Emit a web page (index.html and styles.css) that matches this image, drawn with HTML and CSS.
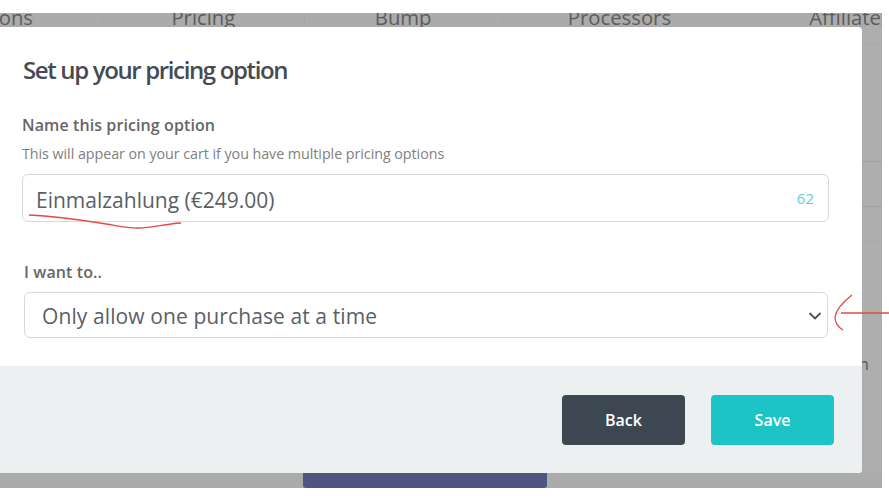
FILE: index.html
```html
<!DOCTYPE html>
<html lang="en">
<head>
  <meta charset="UTF-8">
  <title>Set up your pricing option</title>
  <link rel="stylesheet" href="styles.css">
</head>
<body>
  <div class="page">
    <div class="tabs">
      <div class="tab tab-ons">ons</div>
      <div class="tab tab-pricing">Pricing</div>
      <div class="tab tab-bump">Bump</div>
      <div class="tab tab-processors">Processors</div>
      <div class="tab tab-affiliate">Affiliate</div>
    </div>

    <div class="middle">
      <div class="modal">
        <div class="modal-body">
          <h1>Set up your pricing option</h1>
          <label class="field-label" for="name">Name this pricing option</label>
          <p class="hint">This will appear on your cart if you have multiple pricing options</p>
          <div class="name-box">
            <input id="name" type="text" value="Einmalzahlung (€249.00)">
            <span class="count">62</span>
          </div>
          <label class="field-label want-label" for="want">I want to..</label>
          <div class="select-wrap">
            <select id="want">
              <option>Only allow one purchase at a time</option>
            </select>
            <svg class="chevron" width="14" height="8" viewBox="0 0 14 8">
              <path d="M1.5 1L7 6.5L12.500 1"/>
            </svg>
          </div>
        </div>
        <div class="modal-footer">
          <button class="btn btn-back">Back</button>
          <button class="btn btn-save">Save</button>
        </div>
      </div>
      <div class="side">
        <div class="side-row row-a"></div>
        <div class="side-row row-b"></div>
        <div class="side-row row-c"></div>
        <div class="side-row row-d"></div>
        <div class="side-n">n</div>
      </div>
    </div>

    <div class="under">
      <div class="under-button"></div>
    </div>
  </div>

  <!-- red pen marks on top of the screenshot -->
  <svg class="marks" width="889" height="500" viewBox="0 0 889 500">
    <path d="M29 215C50 216 75 219 100 223C115 225 125 228 138 228C155 228 162 224 181 223"/>
    <path d="M852 295C843 302 836 310 835 317C835 322 838 327 843 330"/>
    <path d="M841 313L889 313"/>
  </svg>
</body>
</html>
```

FILE: styles.css
```css
* {
  margin: 0;
  padding: 0;
  box-sizing: border-box;
}

body {
  background: #fff;
  font-family: 'Open Sans', sans-serif;
  color: #555;
  width: 889px;
  height: 500px;
  overflow: hidden;
}

.page {
  width: 882px;
  margin-top: 13px;
  background: #aeaeae;
}

/* tabs behind the modal, cut off at the top */
.tabs {
  height: 14px;
  display: flex;
  overflow: hidden;
  background: #ababab;
  font-size: 20.300px;
  line-height: 20px;
  color: #5c5c5c;
}

.tab {
  height: 14px;
  display: flex;
  align-items: flex-end;
  justify-content: center;
  border-right: 1px solid #a4a4a4;
  white-space: nowrap;
}

.tab-ons {
  width: 103px;
  justify-content: flex-end;
  padding-right: 69px;
}

.tab-pricing { width: 202px; }
.tab-bump { width: 198px; }
.tab-processors { width: 234px; border-right: 0; }
.tab-affiliate { padding-left: 73px; }

.middle {
  display: flex;
  height: 446px;
}

.modal {
  width: 862px;
  display: flex;
  flex-direction: column;
  background: #fff;
  border-radius: 0 4px 4px 0;
  overflow: hidden;
}

.modal-body {
  height: 339px;
  padding: 25px 33px 0 22px;
}

h1 {
  font-size: 24px;
  line-height: 36px;
  font-weight: 600;
  letter-spacing: -1.36px;
  color: #454b54;
  margin-left: 1px;
}

.field-label {
  display: block;
  font-size: 16px;
  line-height: 20px;
  font-weight: 600;
  letter-spacing: 0.1px;
  color: #666;
}

.modal-body h1 + .field-label {
  margin-top: 27px;
}

.hint {
  margin-top: 9px;
  font-size: 14.300px;
  line-height: 20px;
  letter-spacing: -0.05px;
  color: #808080;
}

.name-box {
  margin-top: 10px;
  height: 48px;
  display: flex;
  align-items: center;
  padding: 0 14px 0 13px;
  border: 1px solid #d8d8d8;
  border-radius: 6px;
}

.name-box input {
  flex: 1;
  border: 0;
  outline: 0;
  padding-top: 3px;
  font-family: inherit;
  font-size: 21px;
  color: #5a5f66;
}

.count {
  font-size: 15px;
  color: #5bd0dc;
}

.want-label {
  margin-top: 40px;
  margin-left: 2px;
}

.select-wrap {
  position: relative;
  margin-top: 10px;
  margin-left: 2px;
  width: 804px;
}

select {
  display: block;
  width: 100%;
  height: 46px;
  padding: 2px 0 0 17px;
  background: #fff;
  border: 1px solid #d8d8d8;
  border-radius: 6px;
  appearance: none;
  font-family: inherit;
  font-size: 21px;
  letter-spacing: 0.1px;
  color: #5a5f66;
}

.chevron {
  position: absolute;
  top: 20px;
  right: 6px;
}

.chevron path {
  fill: none;
  stroke: #4f4f4f;
  stroke-width: 1.8;
}

.modal-footer {
  flex: 1;
  display: flex;
  justify-content: flex-end;
  gap: 26px;
  padding: 29px 28px 0 0;
  background: #ecf0f1;
}

.btn {
  width: 123px;
  height: 50px;
  border: 0;
  border-radius: 4px;
  font-family: inherit;
  font-size: 16px;
  font-weight: 600;
  color: #fff;
}

.btn-back { background: #3d4752; }
.btn-save { background: #1dc4c6; }

/* sliver of the page to the right of the modal */
.side {
  flex: 1;
  overflow: hidden;
  background: #aeaeae;
  font-size: 16px;
  color: #555;
}

.side-row {
  border-bottom: 1px solid #a0a0a0;
}

.row-a { height: 18px; border-bottom-color: #a8a8a8; }
.row-b { height: 117px; }
.row-c { height: 45px; }
.row-d { height: 35px; border-bottom-color: #a8a8a8; }

.side-n {
  margin-top: 112px;
  margin-left: -3px;
  line-height: 20px;
}

.under {
  height: 15px;
  padding-left: 303px;
  background: #ababab;
}

.under-button {
  width: 244px;
  height: 15px;
  background: #4c5680;
  border-radius: 0 0 3px 3px;
}

.marks {
  position: absolute;
  top: 0;
  left: 0;
  pointer-events: none;
}

.marks path {
  fill: none;
  stroke: #e8483f;
  stroke-width: 1.3;
}
```
